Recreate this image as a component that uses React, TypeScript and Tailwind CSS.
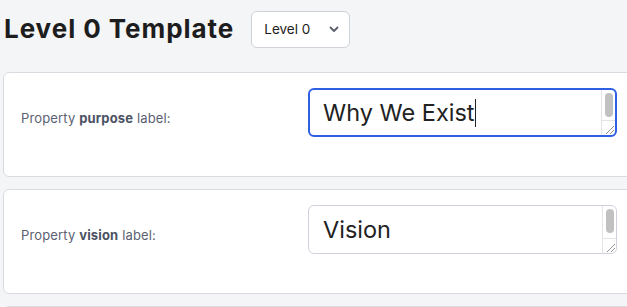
import React from "react";

function FakeScroll() {
  return (
    <div className="pointer-events-none absolute right-0 top-0 bottom-0 w-[14px] border-l border-[#e4e4e4] bg-white flex flex-col rounded-r-[6px] overflow-hidden">
      <div className="flex-1 flex justify-center pt-[3px] pb-[3px]">
        <div className="w-[8px] h-[24px] rounded-full bg-[#c1c1c1]" />
      </div>
      <div className="h-[15px] border-t border-[#e4e4e4] relative">
        <svg width="14" height="15" viewBox="0 0 14 15" className="absolute inset-0">
          <line x1="4" y1="13" x2="12" y2="5" stroke="#777" strokeWidth="0.8" />
          <line x1="8" y1="13" x2="12" y2="9" stroke="#777" strokeWidth="0.8" />
        </svg>
      </div>
    </div>
  );
}

function Row({ prop, value, focused }: { prop: string; value: string; focused?: boolean }) {
  return (
    <div className="w-[640px] ml-[3px] h-[105px] shrink-0 bg-white border border-[#dadbe0] rounded-[6px] flex items-start pl-[17px]">
      <div className="w-[287px] pt-[37px] text-[13px] tracking-[0.15px] leading-[16px] text-[#5b6172]">
        Property <span className="font-bold text-[#4c5263]">{prop}</span> label:
      </div>
      <div
        className={
          "relative mt-[15px] w-[309px] h-[49px] rounded-[6px] bg-white flex items-center " +
          (focused ? "border-2 border-[#2f5fe3] pl-[13px]" : "border border-[#cfd2dc] pl-[14px]")
        }
      >
        <div className="text-[23.5px] leading-none text-[#222] flex items-center">
          {value}
          {focused && <span className="inline-block w-[1px] h-[28px] bg-[#222] ml-[0px]" />}
        </div>
        <FakeScroll />
      </div>
    </div>
  );
}

export default function App() {
  return (
    <div className="w-[627px] h-[307px] overflow-hidden bg-[#f4f5f7]" style={{ fontFamily: "Inter, 'Noto Sans', sans-serif" }}>
      <div className="flex items-center h-[58px] pl-[4px]">
        <h1 className="text-[26px] font-bold text-[#1d1d20] tracking-[0.95px] leading-none">Level 0 Template</h1>
        <div className="ml-[17px] w-[99px] h-[37px] bg-white border border-[#cfd2d8] rounded-[6px] flex items-center justify-between pl-[12px] pr-[9px]">
          <span className="text-[13.5px] text-[#1d1d20]">Level 0</span>
          <svg width="12" height="12" viewBox="0 0 12 12">
            <path d="M2.5 4.5 L6 8 L9.5 4.5" fill="none" stroke="#5a5f6b" strokeWidth="1.8" strokeLinecap="round" strokeLinejoin="round" />
          </svg>
        </div>
      </div>
      <div className="flex flex-col gap-[12px] pt-[14px]">
        <Row prop="purpose" value="Why We Exist" focused />
        <Row prop="vision" value="Vision" />
        <div className="w-[640px] ml-[3px] h-[105px] shrink-0 bg-white border border-[#dadbe0] rounded-[6px]" />
      </div>
    </div>
  );
}
